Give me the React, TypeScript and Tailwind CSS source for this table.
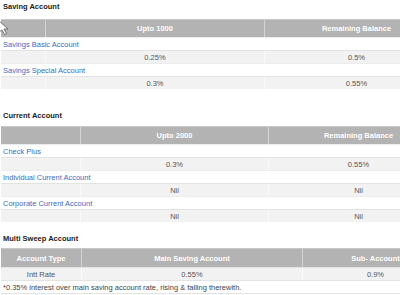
import React from 'react';

type Cols = [string, string, string];

const HeaderRow = ({ cols, labels, tall }: { cols: Cols; labels: [string, string, string]; tall?: boolean }) => (
  <div className={`flex bg-[#b3b3b3] text-white font-bold border-t border-[#c8c8c8] ${tall ? 'h-[19px]' : 'h-[18px]'}`}>
    {labels.map((label, i) => (
      <div
        key={i}
        className={`${cols[i]} flex items-center justify-center ${i > 0 ? 'border-l border-[#d4d4d4]' : ''}`}
      >
        {label}
      </div>
    ))}
  </div>
);

const LinkRow = ({ label }: { label: string }) => (
  <div className="flex items-center h-[13px] bg-white pl-[2px] border-t border-[#ececec]">
    <a className="text-[#3a6cc4]">{label}</a>
  </div>
);

const DataRow = ({ cols, values }: { cols: Cols; values: [string, string, string] }) => (
  <div className="flex h-[13px] bg-[#f2f2f2] border-t border-[#e3e3e3] text-[#555]">
    {values.map((v, i) => (
      <div key={i} className={`${cols[i]} flex items-center justify-center ${i > 0 ? 'border-l border-[#fafafa]' : ''}`}>
        {v}
      </div>
    ))}
  </div>
);

const Heading = ({ children, className }: { children: React.ReactNode; className: string }) => (
  <div className={`font-bold text-[#222] leading-[13px] pl-[2px] ${className}`}>{children}</div>
);

const savingCols: Cols = ['w-[44px]', 'w-[219px]', 'flex-1'];
const currentCols: Cols = ['w-[79px]', 'w-[188px]', 'flex-1'];
const sweepCols: Cols = ['w-[80px]', 'w-[221px]', 'flex-1'];

export default function App() {
  return (
    <div
      className="relative w-[400px] h-[295px] overflow-hidden bg-white text-[7.5px] leading-[13px]"
      style={{ fontFamily: '"Liberation Sans", Arial, sans-serif' }}
    >
      <div className="w-[448px] pl-[1px]">
        {/* Saving Account */}
        <Heading className="mb-[6px]">Saving Account</Heading>
        <div>
          <HeaderRow cols={savingCols} labels={['', 'Upto 1000', 'Remaining Balance']} />
          <LinkRow label="Savings Basic Account" />
          <DataRow cols={savingCols} values={['', '0.25%', '0.5%']} />
          <LinkRow label="Savings Special Account" />
          <DataRow cols={savingCols} values={['', '0.3%', '0.55%']} />
        </div>

        {/* Current Account */}
        <Heading className="mt-[20px] mb-[4px]">Current Account</Heading>
        <div>
          <HeaderRow cols={currentCols} labels={['', 'Upto 2000', 'Remaining Balance']} />
          <LinkRow label="Check Plus" />
          <DataRow cols={currentCols} values={['', '0.3%', '0.55%']} />
          <LinkRow label="Individual Current Account" />
          <DataRow cols={currentCols} values={['', 'Nil', 'Nil']} />
          <LinkRow label="Corporate Current Account" />
          <DataRow cols={currentCols} values={['', 'Nil', 'Nil']} />
        </div>

        {/* Multi Sweep Account */}
        <Heading className="mt-[10px] mb-[3px]">Multi Sweep Account</Heading>
        <div>
          <HeaderRow cols={sweepCols} labels={['Account Type', 'Main Saving Account', 'Sub- Account']} tall />
          <DataRow cols={sweepCols} values={['Intt Rate', '0.55%', '0.9%']} />
          <div className="flex items-center h-[14px] bg-white pl-[2px] border-y border-[#e3e3e3] text-[#444]">
            *0.35% interest over main saving account rate, rising &amp; falling therewith.
          </div>
        </div>
      </div>

      {/* mouse cursor */}
      <svg className="absolute left-0 top-[20px]" width="9" height="15" viewBox="0 0 9 15">
        <path d="M-2 0 L8 9 L4 9 L6.5 13.5 L4.5 14.5 L2 10 L-1 12 Z" fill="#fff" stroke="#555" strokeWidth="0.8" />
      </svg>
    </div>
  );
}
